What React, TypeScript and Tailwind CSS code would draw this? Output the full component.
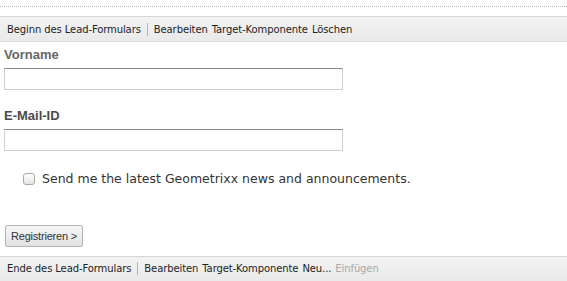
import React from 'react';

const barFont = { fontFamily: '"DejaVu Sans", Verdana, sans-serif' };

const Toolbar: React.FC<{ title: string; items: { label: string; disabled?: boolean }[] }> = ({ title, items }) => (
  <div className="h-[26px] border-t border-[#d4d4d4] bg-gradient-to-b from-[#f3f3f3] to-[#e9e9e9] border-b border-b-[#dcdcdc] flex items-center pl-[7px] text-[10px] tracking-[-0.1px] text-[#222]" style={barFont}>
    <span>{title}</span>
    <span className="mx-[6px] h-[13px] w-px bg-[#b5b5b5]"></span>
    <div className="flex gap-[4px]">
      {items.map(i => (
        <span key={i.label} className={i.disabled ? 'text-[#a8a8a8]' : ''}>{i.label}</span>
      ))}
    </div>
  </div>
);

export default function App() {
  return (
    <div className="w-[567px] h-[281px] bg-white overflow-hidden relative">
      <div className="pt-[6px]">
        <div className="border-t border-dotted border-[#b8b8b8]"></div>
      </div>
      <div className="mt-[9px]">
        <Toolbar
          title="Beginn des Lead-Formulars"
          items={[{ label: 'Bearbeiten' }, { label: 'Target-Komponente' }, { label: 'Löschen' }]}
        />
      </div>

      <div className="px-[4px]" style={{ fontFamily: '"Liberation Sans", Arial, sans-serif' }}>
        <label className="block mt-[5px] text-[13px] font-bold text-[#666] leading-[16px]">Vorname</label>
        <input className="block mt-[5px] w-[339px] h-[22px] border border-[#cfcfcf] border-t-[#8a8a8a] bg-white outline-none" />

        <label className="block mt-[18px] text-[13px] font-bold text-[#4a4a4a] leading-[16px]">E-Mail-ID</label>
        <input className="block mt-[5px] w-[339px] h-[22px] border border-[#cfcfcf] border-t-[#8a8a8a] bg-white outline-none" />

        <div className="flex items-center mt-[19px] pl-[19px]">
          <span className="w-[12px] h-[12px] rounded-[3px] border border-[#a9a9a9] bg-gradient-to-b from-white to-[#e6e6e6]"></span>
          <span className="ml-[7px] text-[12.5px] text-[#333]" style={{ fontFamily: '"DejaVu Sans", sans-serif' }}>
            Send me the latest Geometrixx news and announcements.
          </span>
        </div>

        <button className="block mt-[36px] ml-[1px] h-[22px] px-[5px] border border-[#b4b4b4] rounded-[2px] bg-gradient-to-b from-[#f7f7f7] to-[#e2e2e2] text-[11px] tracking-[-0.2px] text-[#333]">
          Registrieren &gt;
        </button>
      </div>

      <div className="mt-[9px]">
        <Toolbar
          title="Ende des Lead-Formulars"
          items={[{ label: 'Bearbeiten' }, { label: 'Target-Komponente' }, { label: 'Neu...' }, { label: 'Einfügen', disabled: true }]}
        />
      </div>
    </div>
  );
}
